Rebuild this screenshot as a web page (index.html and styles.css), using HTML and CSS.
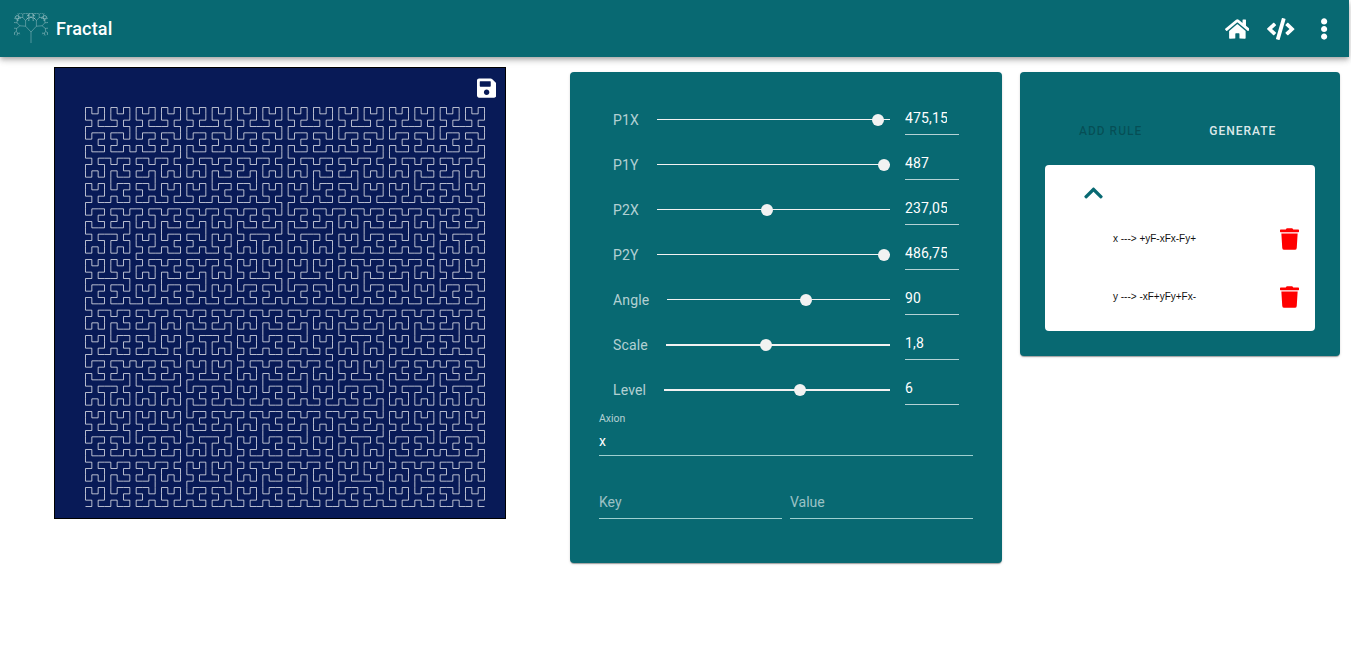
FILE: index.html
```html
<!DOCTYPE html>
<html lang="en">
<head>
<meta charset="utf-8">
<title>Fractal</title>
<link rel="stylesheet" href="styles.css">
</head>
<body>
<div class="app">
  <header class="appbar">
    <canvas class="logo" id="logo" width="34" height="32"></canvas>
    <span class="brand">Fractal</span>
    <span class="spacer"></span>
    <svg class="bar-icon home" viewBox="0 0 576 512"><path d="M280.37 148.26L96 300.11V464a16 16 0 0 0 16 16l112.06-.29a16 16 0 0 0 15.92-16V368a16 16 0 0 1 16-16h64a16 16 0 0 1 16 16v95.64a16 16 0 0 0 16 16.05L464 480a16 16 0 0 0 16-16V300L295.67 148.26a12.19 12.19 0 0 0-15.3 0zM571.6 251.47L488 182.56V44.05a12 12 0 0 0-12-12h-56a12 12 0 0 0-12 12v72.61L318.47 43a48 48 0 0 0-61 0L4.34 251.47a12 12 0 0 0-1.6 16.9l25.5 31A12 12 0 0 0 45.15 301l235.22-193.74a12.19 12.19 0 0 1 15.3 0L530.9 301a12 12 0 0 0 16.9-1.6l25.5-31a12 12 0 0 0-1.7-16.93z"/></svg>
    <svg class="bar-icon code" viewBox="0 0 640 512"><path d="M278.9 511.5l-61-17.7c-6.4-1.8-10-8.5-8.2-14.9L346.2 8.7c1.8-6.4 8.5-10 14.9-8.2l61 17.7c6.4 1.8 10 8.5 8.2 14.9L293.8 503.3c-1.9 6.4-8.5 10.1-14.9 8.2zm-114-112.2l43.5-46.4c4.6-4.9 4.3-12.7-.8-17.2L117 256l90.6-79.7c5.1-4.5 5.5-12.3.8-17.2l-43.5-46.4c-4.5-4.8-12.1-5.1-17-.5L3.8 247.2c-5.1 4.7-5.1 12.8 0 17.5l144.1 135.1c4.9 4.6 12.5 4.4 17-.5zm327.2.6l144.1-135.1c5.1-4.7 5.1-12.8 0-17.5L492.1 112.1c-4.8-4.5-12.4-4.3-17 .5L431.6 159c-4.6 4.9-4.3 12.7.8 17.2L523 256l-90.6 79.7c-5.1 4.5-5.5 12.3-.8 17.2l43.5 46.4c4.5 4.9 12.1 5.1 17 .6z"/></svg>
    <svg class="bar-icon dots" viewBox="0 0 192 512"><path d="M96 184c39.8 0 72 32.2 72 72s-32.2 72-72 72-72-32.2-72-72 32.2-72 72-72zM24 80c0 39.8 32.2 72 72 72s72-32.2 72-72S135.8 8 96 8 24 40.2 24 80zm0 352c0 39.8 32.2 72 72 72s72-32.2 72-72-32.2-72-72-72-72 32.2-72 72z"/></svg>
  </header>

  <main class="content">
    <section class="stage">
      <canvas id="fractal" class="fractal" width="450" height="450"></canvas>
      <svg class="save" viewBox="0 0 448 512"><path d="M433.941 129.941l-83.882-83.882A48 48 0 0 0 316.118 32H48C21.49 32 0 53.49 0 80v352c0 26.51 21.49 48 48 48h352c26.51 0 48-21.49 48-48V163.882a48 48 0 0 0-14.059-33.941zM224 416c-35.346 0-64-28.654-64-64 0-35.346 28.654-64 64-64s64 28.654 64 64c0 35.346-28.654 64-64 64zm96-304.52V212c0 6.627-5.373 12-12 12H76c-6.627 0-12-5.373-12-12V108c0-6.627 5.373-12 12-12h228.52c3.183 0 6.235 1.264 8.485 3.515l3.48 3.48A11.996 11.996 0 0 1 320 111.48z"/></svg>
    </section>

    <section class="card controls">
      <div class="sliders">
        <div class="row"><span class="label">P1X</span><div class="slider"><i class="thumb" style="left:95%"></i></div><div class="num"><span>475,15</span></div></div>
        <div class="row"><span class="label">P1Y</span><div class="slider"><i class="thumb" style="left:97.4%"></i></div><div class="num"><span>487</span></div></div>
        <div class="row"><span class="label">P2X</span><div class="slider"><i class="thumb" style="left:47.4%"></i></div><div class="num"><span>237,05</span></div></div>
        <div class="row"><span class="label">P2Y</span><div class="slider"><i class="thumb" style="left:97.4%"></i></div><div class="num"><span>486,75</span></div></div>
        <div class="row"><span class="label">Angle</span><div class="slider"><i class="thumb" style="left:62.4%"></i></div><div class="num"><span>90</span></div></div>
        <div class="row"><span class="label">Scale</span><div class="slider thick"><i class="thumb" style="left:44.9%"></i></div><div class="num"><span>1,8</span></div></div>
        <div class="row"><span class="label">Level</span><div class="slider thick"><i class="thumb" style="left:60%"></i></div><div class="num"><span>6</span></div></div>
      </div>
      <div class="field axion">
        <span class="float-label">Axion</span>
        <span class="value">x</span>
      </div>
      <div class="pair">
        <div class="field"><span class="placeholder">Key</span></div>
        <div class="field"><span class="placeholder">Value</span></div>
      </div>
    </section>

    <section class="card rules">
      <div class="actions">
        <span class="btn disabled">ADD RULE</span>
        <span class="btn">GENERATE</span>
      </div>
      <div class="rule-box">
        <div class="rule-head">
          <svg class="chevron" viewBox="0 0 448 512"><path d="M240.971 130.524l194.343 194.343c9.373 9.373 9.373 24.569 0 33.941l-22.667 22.667c-9.357 9.357-24.522 9.375-33.901.04L224 227.495 69.255 381.516c-9.379 9.335-24.544 9.317-33.901-.04l-22.667-22.667c-9.373-9.373-9.373-24.569 0-33.941L207.03 130.525c9.372-9.373 24.568-9.373 33.941-.001z"/></svg>
        </div>
        <div class="rule"><span class="rule-text">x ---&gt; +yF-xFx-Fy+</span><svg class="trash" viewBox="0 0 448 512"><path d="M432 32H312l-9.4-18.7A24 24 0 0 0 281.1 0H166.8a23.72 23.72 0 0 0-21.4 13.3L136 32H16A16 16 0 0 0 0 48v32a16 16 0 0 0 16 16h416a16 16 0 0 0 16-16V48a16 16 0 0 0-16-16zM53.2 467a48 48 0 0 0 47.9 45h245.8a48 48 0 0 0 47.9-45L416 128H32z"/></svg></div>
        <div class="rule"><span class="rule-text">y ---&gt; -xF+yFy+Fx-</span><svg class="trash" viewBox="0 0 448 512"><path d="M432 32H312l-9.4-18.7A24 24 0 0 0 281.1 0H166.8a23.72 23.72 0 0 0-21.4 13.3L136 32H16A16 16 0 0 0 0 48v32a16 16 0 0 0 16 16h416a16 16 0 0 0 16-16V48a16 16 0 0 0-16-16zM53.2 467a48 48 0 0 0 47.9 45h245.8a48 48 0 0 0 47.9-45L416 128H32z"/></svg></div>
      </div>
    </section>
  </main>
</div>
<script src="app.js"></script>
</body>
</html>
```
FILE: styles.css
```css
* { box-sizing: border-box; }
html, body { margin: 0; height: 100%; overflow: hidden; background: #fff; }
body { font-family: Roboto, "Liberation Sans", sans-serif; }
.app { width: 1349px; height: 662px; }
.appbar {
  height: 57px; background: #086972; color: #fff;
  display: flex; align-items: center; padding: 0 21px 0 14px;
  box-shadow: 0 2px 4px -1px rgba(0,0,0,.2), 0 4px 5px 0 rgba(0,0,0,.14), 0 1px 10px 0 rgba(0,0,0,.12);
}
.logo { width: 34px; height: 32px; margin-right: 8px; display: block; }
.brand { font-size: 18px; font-weight: 500; letter-spacing: .2px; }
.spacer { flex: 1; }
.bar-icon { fill: #fff; height: 22px; display: block; }
.home { margin-right: 18px; }
.code { margin-right: 25px; }

.content { display: flex; align-items: flex-start; padding-left: 54px; }
.stage { position: relative; width: 452px; margin-top: 10px; margin-right: 64px; }
.fractal { display: block; width: 452px; height: 452px; border: 1px solid #000; background: #081a57; }
.save { position: absolute; top: 10px; right: 10px; height: 22px; fill: #fff; }

.card { background: #086972; border-radius: 4px; margin-top: 15px; box-shadow: 0 2px 1px -1px rgba(0,0,0,.2), 0 1px 1px 0 rgba(0,0,0,.14), 0 1px 3px 0 rgba(0,0,0,.12); }
.controls { width: 432px; height: 491px; padding: 25px 29px 0; margin-right: 18px; }
.sliders { padding: 0 14px; display: flex; flex-direction: column; }
.row { display: flex; align-items: center; height: 45px; }
.label { font-size: 14px; color: rgba(255,255,255,.7); margin-right: 18px; letter-spacing: .15px; line-height: 44px; }
.slider { flex: 1; height: 1px; background: #f2f2f2; position: relative; }
.slider.thick { height: 2px; }
.thumb { position: absolute; top: 50%; width: 12px; height: 12px; border-radius: 50%; background: #f2f2f2; transform: translate(-50%, -50%); }
.num { width: 54px; margin-left: 15px; height: 45px; padding-top: 13px; border-bottom: 0; color: #fff; font-size: 14px; line-height: 16px; position: relative; }
.num span { display: block; width: 42px; overflow: hidden; white-space: nowrap; letter-spacing: .15px; }
.num::after { content: ""; position: absolute; left: 0; right: 0; top: 37px; height: 1px; background: rgba(255,255,255,.7); }
.field { flex: 1; border-bottom: 1px solid #9ed0d0; position: relative; color: #fff; font-size: 14px; }
.axion { height: 51px; margin-top: -7px; padding-top: 28px; }
.float-label { position: absolute; left: 0; top: 8px; font-size: 10.5px; color: rgba(255,255,255,.7); line-height: 12px; }
.value { display: block; line-height: 16px; }
.pair { display: flex; gap: 8px; margin-top: 38px; }
.pair .field { height: 25px; }
.placeholder { color: rgba(255,255,255,.6); line-height: 16px; display: block; }

.rules { width: 320px; height: 284px; padding: 0 25px; }
.actions { height: 93px; display: flex; padding-top: 52px; padding-left: 34px; }
.btn { font-size: 12px; font-weight: 500; letter-spacing: 1px; color: rgba(255,255,255,.87); line-height: 14px; }
.btn.disabled { color: rgba(0,0,0,.26); margin-right: 67px; }
.rule-box { background: #fff; border-radius: 4px; height: 166px; display: flex; flex-direction: column; }
.rule-head { height: 45px; padding: 17px 0 0 39px; }
.chevron { display: block; width: 19px; height: 22px; fill: #086972; }
.rule { height: 58px; display: flex; align-items: center; padding: 0 16px 0 68px; justify-content: space-between; }
.rule-text { font-family: "Liberation Sans", Arial, sans-serif; font-size: 10px; color: #111; line-height: 12px; }
.trash { width: 19px; height: 22px; fill: #f00; display: block; }
```
FILE: app.js
```js
(function () {
  function expand(axiom, rules, level) {
    var s = axiom;
    for (var i = 0; i < level; i++) {
      var out = [];
      for (var j = 0; j < s.length; j++) out.push(rules[s[j]] || s[j]);
      s = out.join('');
    }
    return s;
  }

  var c = document.getElementById('fractal').getContext('2d');
  c.fillStyle = '#081a57';
  c.fillRect(0, 0, 450, 450);
  var step = 399 / 63, x = 429.5, y = 438.5, a = Math.PI;
  var s = expand('x', { x: '+yF-xFx-Fy+', y: '-xF+yFy+Fx-' }, 6);
  c.strokeStyle = 'rgba(255,255,255,.7)';
  c.lineWidth = 1;
  c.beginPath();
  c.moveTo(x, y);
  for (var i = 0; i < s.length; i++) {
    var k = s[i];
    if (k === '+') a += Math.PI / 2;
    else if (k === '-') a -= Math.PI / 2;
    else if (k === 'F') {
      x += Math.cos(a) * step;
      y += Math.sin(a) * step;
      c.lineTo(x, y);
    }
  }
  c.stroke();

  var l = document.getElementById('logo').getContext('2d');
  l.strokeStyle = 'rgba(255,255,255,.5)';
  l.lineWidth = .6;
  function branch(px, py, ang, len, depth) {
    var nx = px + Math.cos(ang) * len, ny = py + Math.sin(ang) * len;
    l.beginPath(); l.moveTo(px, py); l.lineTo(nx, ny); l.stroke();
    if (depth > 0) {
      branch(nx, ny, ang - .75, len * .72, depth - 1);
      branch(nx, ny, ang + .75, len * .72, depth - 1);
    }
  }
  branch(17, 30, -Math.PI / 2, 11, 7);
})();
```
